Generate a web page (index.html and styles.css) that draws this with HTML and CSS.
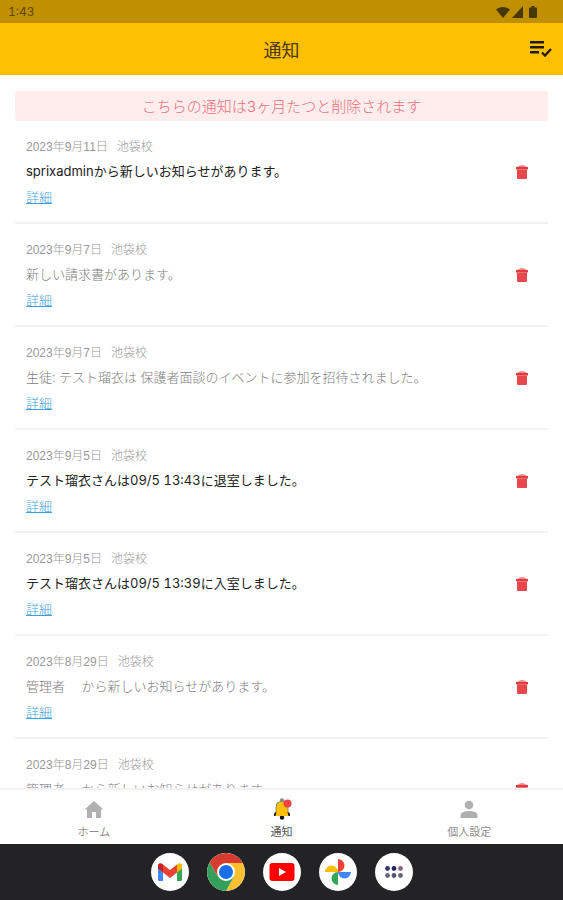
FILE: index.html
```html
<!DOCTYPE html>
<html lang="ja">
<head>
    <meta charset="UTF-8" />
    <meta name="viewport" content="width=device-width, initial-scale=1.0" />
    <title>通知</title>
    <link rel="stylesheet" href="styles.css">
</head>
<body>

    <!-- ステータスバー -->
    <div class="status-bar">
        <span>1:43</span>
        <div class="status-icons">
            <svg width="14" height="12" viewBox="0 0 14 12"><path d="M0 3.5C4 0 10 0 14 3.5L7 12z"/></svg>
            <svg width="11" height="12" viewBox="0 0 11 12"><path d="M11 0v12H0z"/></svg>
            <svg class="battery" width="8" height="12" viewBox="0 0 8 12"><path d="M2.5 0h3v1.5H7q1 0 1 1V11q0 1-1 1H1q-1 0-1-1V2.5q0-1 1-1h1.5z"/></svg>
        </div>
    </div>

    <!-- ヘッダー -->
    <header class="app-header">
        <h1>通知</h1>
        <button class="read-all-btn" aria-label="すべて既読にする">
            <svg width="22" height="18" viewBox="0 0 22 18">
                <path d="M0 1h14v2.500H0zM0 6h14v2.500H0zM0 11h9v2.500H0z"/>
                <path d="M12 12.500l3 3 6-6.500" fill="none" stroke="#241c0a" stroke-width="2.300"/>
            </svg>
        </button>
    </header>

    <!-- 通知一覧 -->
    <main class="content">
        <p class="notice">こちらの通知は3ヶ月たつと削除されます</p>
        <ul class="list" id="list"></ul>
    </main>

    <!-- タブ -->
    <nav class="tabs">
        <a class="tab" href="#home">
            <svg width="20" height="22" viewBox="0 0 20 22"><path fill="#b0b0b0" d="M10 3l9.500 8.500H17V20h-5v-6H8v6H3v-8.500H.5z"/></svg>
            <span>ホーム</span>
        </a>
        <a class="tab active" href="#notifications">
            <svg width="20" height="22" viewBox="0 0 20 22">
                <circle cx="10" cy="2.500" r="2.200" fill="#8b8f8c"/>
                <circle cx="10" cy="19.500" r="2.200" fill="#111"/>
                <path fill="#8a8a72" d="M3.500 17V9q0-6 6.500-6t6.500 6v8z"/>
                <path fill="#1c1c18" d="M2 18v-2.500L4 14h12l2 1.500V18z"/>
                <path fill="#ffc107" d="M3.500 18l1-4V9.500q0-5.500 5.500-5.500t5.500 5.500V14l1 4z"/>
                <circle cx="15.500" cy="5.500" r="4" fill="#ef4444"/>
            </svg>
            <span>通知</span>
        </a>
        <a class="tab" href="#settings">
            <svg width="20" height="22" viewBox="0 0 20 22"><circle cx="10" cy="7" r="4.300" fill="#b0b0b0"/><path fill="#b0b0b0" d="M1.500 20v-2.500q0-4.500 8.500-4.500t8.500 4.500V20z"/></svg>
            <span>個人設定</span>
        </a>
    </nav>

    <!-- ドック -->
    <div class="dock">
        <button aria-label="Gmail">
            <svg viewBox="0 0 38 38">
                <path fill="#4285f4" d="M7 13l5 3.500V28H8.500Q7 28 7 26.500z"/>
                <path fill="#34a853" d="M26 16.500l5-3.500v13.500q0 1.500-1.500 1.500H26z"/>
                <path fill="#fbbc04" d="M26 11.500l1.500-1q3.500-1 3.500 2.500v2.500l-5 4z"/>
                <path fill="#c5221f" d="M12 11.500l-1.500-1Q7 9.500 7 13v2.500l5 4z"/>
                <path fill="#ea4335" d="M12 11.500l7 5.500 7-5.500v8L19 25l-7-5.500z"/>
            </svg>
        </button>
        <button aria-label="Chrome">
            <svg viewBox="0 0 38 38">
                <path fill="#fbc02d" d="M19 10h16.700A19 19 0 0 1 19 38l8-14.500z"/>
                <path fill="#34a05a" d="M2.500 9.500A19 19 0 0 0 19 38l8-14.500-16 0z"/>
                <path fill="#d93b30" d="M2.500 9.500A19 19 0 0 1 35.700 10H19l-8 13.500z"/>
                <circle cx="19" cy="19" r="9" fill="#fff"/>
                <circle cx="19" cy="19" r="7" fill="#1a6fe8"/>
            </svg>
        </button>
        <button aria-label="YouTube">
            <svg viewBox="0 0 38 38">
                <rect x="6.500" y="10" width="25" height="18" rx="3" fill="#f00"/>
                <path fill="#fff" d="M16 15l7 4-7 4z"/>
            </svg>
        </button>
        <button aria-label="フォト">
            <svg viewBox="0 0 38 38">
                <path fill="#ea4335" d="M19 6a6.500 6.500 0 0 1 0 13z"/>
                <path fill="#4285f4" d="M32 19a6.500 6.500 0 0 1-13 0z"/>
                <path fill="#34a853" d="M19 32a6.500 6.500 0 0 1 0-13z"/>
                <path fill="#fbbc04" d="M6 19a6.500 6.500 0 0 1 13 0z"/>
            </svg>
        </button>
        <button aria-label="アプリ一覧">
            <svg viewBox="0 0 38 38">
                <circle cx="12.500" cy="15.500" r="2.400" fill="#303572"/>
                <circle cx="19" cy="15.500" r="2.400" fill="#25256e"/>
                <circle cx="25.500" cy="15.500" r="2.400" fill="#8a6578"/>
                <circle cx="12.500" cy="22.500" r="2.400" fill="#66667c"/>
                <circle cx="19" cy="22.500" r="2.400" fill="#55556f"/>
                <circle cx="25.500" cy="22.500" r="2.400" fill="#66667c"/>
            </svg>
        </button>
    </div>

    <script>
        const notifications = [
            { date: "2023年9月11日", text: "sprixadminから新しいお知らせがあります。", unread: true },
            { date: "2023年9月7日", text: "新しい請求書があります。", unread: false },
            { date: "2023年9月7日", text: "生徒: テスト瑠衣は 保護者面談のイベントに参加を招待されました。", unread: false },
            { date: "2023年9月5日", text: "テスト瑠衣さんは09/5 13:43に退室しました。", unread: true },
            { date: "2023年9月5日", text: "テスト瑠衣さんは09/5 13:39に入室しました。", unread: true },
            { date: "2023年8月29日", text: "管理者\u3000 から新しいお知らせがあります。", unread: false },
            { date: "2023年8月29日", text: "管理者\u3000 から新しいお知らせがあります。", unread: false },
        ];

        document.getElementById('list').innerHTML = notifications.map(n => `
            <li class="item ${n.unread ? 'unread' : ''}">
                <div class="item-body">
                    <p class="meta"><span>${n.date}</span><span>池袋校</span></p>
                    <p class="message">${n.text}</p>
                    <a class="detail" href="#detail">詳細</a>
                </div>
                <button class="delete-btn" aria-label="削除">
                    <svg width="12" height="14" viewBox="0 0 12 14">
                        <path fill="#f28b8b" d="M1 2Q6-2 11 2z"/>
                        <path fill="#e23b3f" d="M0 2h12v2.500H0z"/>
                        <path fill="#e8484b" d="M1 4.500h10V13q0 1-1 1H2q-1 0-1-1z"/>
                    </svg>
                </button>
            </li>`).join('');
    </script>

</body>
</html>
```
FILE: styles.css
```css
* {
    margin: 0;
    padding: 0;
    box-sizing: border-box;
}

body {
    font-family: Inter, 'Noto Sans CJK JP', sans-serif;
    font-variant-numeric: tabular-nums;
    background-color: #fff;
    height: 100vh;
    display: flex;
    flex-direction: column;
    overflow: hidden;
}

button {
    border: none;
    background: none;
    cursor: pointer;
}

svg {
    display: block;
}

.status-bar {
    display: flex;
    justify-content: space-between;
    align-items: center;
    height: 23px;
    padding: 0 26px 0 8px;
    background-color: #c09000;
    color: #5c4608;
    font-size: 12px;
}

.status-icons {
    display: flex;
    gap: 2px;
    fill: #463704;
}

.battery {
    margin-left: 4px;
}

.app-header {
    position: relative;
    display: flex;
    justify-content: center;
    align-items: center;
    height: 52px;
    padding-top: 4px;
    background-color: #ffc003;
}

.app-header h1 {
    font-size: 18px;
    line-height: 24px;
    font-weight: 400;
    color: #4a3a0c;
}

.read-all-btn {
    position: absolute;
    top: 17px;
    right: 11px;
    fill: #241c0a;
}

.content {
    flex: 1;
    min-height: 0;
    padding: 16px 15px 0;
    overflow-y: auto;
    scrollbar-width: none;
}

.notice {
    padding: 4px 0 2px;
    border-radius: 3px;
    background-color: #ffecec;
    color: #e8707c;
    font-size: 15px;
    line-height: 24px;
    font-weight: 300;
    text-align: center;
}

.list {
    list-style: none;
}

.item {
    display: flex;
    justify-content: space-between;
    align-items: center;
    height: 103px;
    padding: 0 20px 0 11px;
    border-bottom: 2px solid #f2f2f2;
}

.item-body {
    padding-top: 2px;
}

.meta {
    display: flex;
    gap: 9px;
    font-family: 'Liberation Sans', 'Noto Sans CJK JP', sans-serif;
    font-size: 12px;
    line-height: 24px;
    font-weight: 300;
    color: #999;
}

.message {
    font-size: 13px;
    line-height: 24px;
    font-weight: 300;
    color: #808080;
}

.unread .message {
    font-weight: 400;
    color: #222;
}

.detail {
    display: block;
    width: fit-content;
    font-size: 13px;
    line-height: 28px;
    font-weight: 300;
    color: #3f9fdc;
}

.delete-btn {
    flex: none;
}

.tabs {
    display: flex;
    height: 56px;
    border-top: 2px solid #f2f2f2;
    background-color: #fff;
}

.tab {
    flex: 1;
    display: flex;
    flex-direction: column;
    align-items: center;
    padding-top: 8px;
    gap: 4px;
    color: #909090;
    font-size: 11px;
    line-height: 16px;
    text-decoration: none;
}

.tab.active {
    color: #555;
}

.dock {
    display: flex;
    justify-content: center;
    align-items: center;
    gap: 18px;
    height: 56px;
    background-color: #232326;
}

.dock button {
    width: 38px;
    height: 38px;
    border-radius: 50%;
    background-color: #fff;
    overflow: hidden;
}
```
